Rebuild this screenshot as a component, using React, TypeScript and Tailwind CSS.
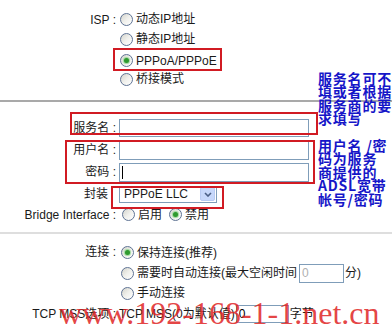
const ui = '"Liberation Sans", "Noto Sans CJK SC", sans-serif'

function Radio({ checked = false }: { checked?: boolean }) {
  return (
    <span className="inline-flex h-[13px] w-[13px] shrink-0 items-center justify-center rounded-full border border-[#5f7394] bg-gradient-to-br from-[#d4d4cc] via-[#f0f0ec] to-white">
      {checked && (
        <span className="h-[5px] w-[5px] rounded-full bg-[#2f9a2f] shadow-[0_0_1px_1px_#9bd89b]" />
      )}
    </span>
  )
}

function Option({ checked = false, children }: { checked?: boolean; children: React.ReactNode }) {
  return (
    <span className="inline-flex items-center gap-[3px]">
      <Radio checked={checked} />
      <span>{children}</span>
    </span>
  )
}

function Row({ label, h, children, labelPad = '' }: { label?: string; h: string; children?: React.ReactNode; labelPad?: string }) {
  return (
    <div className={`flex items-center ${h}`}>
      <div className={`w-[116px] shrink-0 text-right ${labelPad}`}>{label}</div>
      <div className="flex items-center pl-[3px]">{children}</div>
    </div>
  )
}

function TextBox({ w, h, value, caret = false, muted = false }: { w: string; h: string; value?: string; caret?: boolean; muted?: boolean }) {
  return (
    <div className={`flex items-center border border-[#7f9db9] bg-white pl-[2px] ${w} ${h} ${muted ? 'text-[#b0b0b0]' : 'text-black'}`}>
      {caret && <span className="h-[13px] w-px bg-black" />}
      {value}
    </div>
  )
}

export default function App() {
  return (
    <div
      className="relative h-[328px] w-[392px] overflow-hidden bg-white text-[12px] leading-none text-[#1a1a1a]"
      style={{ fontFamily: ui }}
    >
      <div className="pt-[10px]">
        <Row label="ISP :" h="h-[20px]">
          <span className="pl-[1px]"><Option>动态IP地址</Option></span>
        </Row>
        <Row h="h-[20px]">
          <span className="pl-[1px]"><Option>静态IP地址</Option></span>
        </Row>
        <Row h="h-[20px]">
          <span className="pl-[1px]"><Option checked>PPPoA/PPPoE</Option></span>
        </Row>
        <Row h="h-[20px]">
          <span className="pl-[1px]"><Option>桥接模式</Option></span>
        </Row>
      </div>

      <div className="mt-[10px] h-[2px] bg-[#a9a9a9]" />

      <div className="pt-[15px]">
        <Row label="服务名 :" h="h-[22px]">
          <TextBox w="w-[190px]" h="h-[18px]" />
        </Row>
        <Row label="用户名 :" h="h-[22px]">
          <TextBox w="w-[190px]" h="h-[19px]" />
        </Row>
        <Row label="密码 :" h="h-[22px]">
          <TextBox w="w-[190px]" h="h-[19px]" caret />
        </Row>
        <Row label="封装" labelPad="pr-[8px]" h="h-[22px]">
          <div className="flex h-[17px] w-[98px] items-center justify-between border border-[#7f9db9] bg-white pl-[4px] pr-px">
            <span>PPPoE LLC</span>
            <span className="flex h-[14px] w-[15px] items-center justify-center rounded-[2px] border border-[#b8cbf3] bg-[#c7d8fb]">
              <svg width="8" height="5" viewBox="0 0 8 5">
                <path d="M1 1l3 3 3-3" stroke="#4b5f86" strokeWidth="1.6" fill="none" />
              </svg>
            </span>
          </div>
        </Row>
        <Row label="Bridge Interface :" h="h-[19px]">
          <span className="flex items-center gap-[7px] pl-[3px]">
            <Option>启用</Option>
            <Option checked>禁用</Option>
          </span>
        </Row>
      </div>

      <div className="mt-[8px] h-[2px] bg-[#dedede]" />

      <div className="pt-[8px]">
        <Row label="连接 :" h="h-[20px]">
          <span className="pl-[2px]"><Option checked>保持连接(推荐)</Option></span>
        </Row>
        <Row h="h-[22px]">
          <span className="flex items-center pl-[2px]">
            <Option>需要时自动连接(最大空闲时间</Option>
            <span className="ml-[2px]"><TextBox w="w-[45px]" h="h-[19px]" value="0" muted /></span>
            <span className="ml-px">分)</span>
          </span>
        </Row>
        <Row h="h-[20px]">
          <span className="pl-[2px]"><Option>手动连接</Option></span>
        </Row>
        <Row label="TCP MSS选项 :" h="h-[20px]">
          <span className="flex items-center">
            <span>TCP MSS(0为默认值)</span>
            <span className="ml-px"><TextBox w="w-[53px]" h="h-[18px]" value="0" /></span>
            <span className="ml-px">字节</span>
          </span>
        </Row>
      </div>

      {/* annotation boxes */}
      <div className="absolute left-[113px] top-[48px] h-[23px] w-[109px] border-2 border-[#d11b23]" />
      <div className="absolute left-[70px] top-[112px] h-[23px] w-[248px] border-2 border-[#d11b23]" />
      <div className="absolute left-[65px] top-[140px] h-[44px] w-[250px] border-2 border-[#d11b23]" />
      <div className="absolute left-[111px] top-[186px] h-[23px] w-[113px] border-2 border-[#d11b23]" />

      <div
        className="absolute left-[318px] top-[72px] w-[80px] whitespace-nowrap text-[14px] font-bold leading-[13.4px] tracking-[0.8px] text-[#1616c8]"
        style={{ fontFamily: '"Noto Sans CJK SC", sans-serif' }}
      >
        <div>服务名可不</div>
        <div>填或者根据</div>
        <div>服务商的要</div>
        <div>求填写</div>
      </div>
      <div
        className="absolute left-[318px] top-[139px] w-[80px] whitespace-nowrap text-[14px] font-bold leading-[13.4px] tracking-[0.8px] text-[#1616c8]"
        style={{ fontFamily: '"Noto Sans CJK SC", sans-serif' }}
      >
        <div>用户名 /密</div>
        <div>码为服务</div>
        <div>商提供的</div>
        <div>ADSL宽带</div>
        <div>帐号/密码</div>
      </div>

      <div
        className="absolute left-[59px] top-[297px] whitespace-nowrap text-[32px] leading-[32px] text-[#e02424]/85"
        style={{ fontFamily: '"Liberation Serif", serif' }}
      >
        www.192-168-1-1.net.cn
      </div>
    </div>
  )
}
